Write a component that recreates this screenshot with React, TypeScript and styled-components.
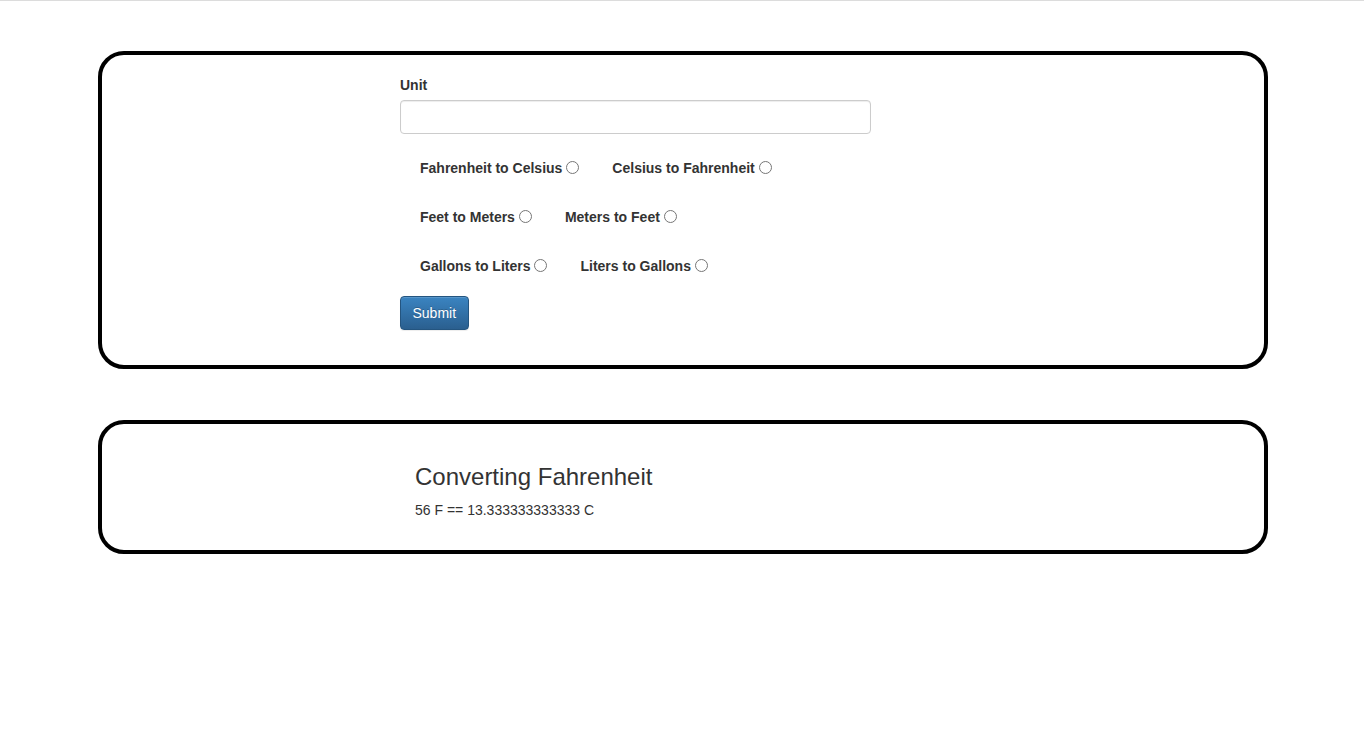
import React from "react";
import styled, { createGlobalStyle } from "styled-components";

const Global = createGlobalStyle`
  html, body { margin: 0; padding: 0; background: #fff; }
  body {
    font-family: "Liberation Sans", Arial, Helvetica, sans-serif;
    font-size: 14px;
    line-height: 20px;
    color: #333;
  }
  * { box-sizing: border-box; }
`;

const TopRule = styled.div`
  height: 1px;
  background: #dcdcdc;
`;

const Page = styled.main`
  display: flex;
  flex-direction: column;
  gap: 51px;
  padding: 50px 0 0 98px;
`;

const Card = styled.section<{ $inset: number; $bottom: number }>`
  width: 1170px;
  border: 4px solid #000;
  border-radius: 26px;
  padding: 20px 0 ${(p) => p.$bottom}px ${(p) => p.$inset}px;
`;

const Form = styled.form`
  display: flex;
  flex-direction: column;
  align-items: flex-start;
`;

const FieldLabel = styled.label`
  display: block;
  font-weight: bold;
  margin-bottom: 5px;
`;

const TextInput = styled.input`
  display: block;
  width: 471px;
  height: 34px;
  padding: 6px 12px;
  font: inherit;
  border: 1px solid #ccc;
  border-radius: 4px;
  box-shadow: inset 0 1px 1px rgba(0, 0, 0, 0.075);
  outline: none;
`;

const RadioGroup = styled.div`
  display: flex;
  flex-direction: column;
  gap: 29px;
  margin: 24px 0 20px;
`;

const RadioRow = styled.div`
  display: flex;
  gap: 30px;
  padding-left: 20px;
  height: 20px;
  align-items: center;
`;

const RadioLabel = styled.label`
  display: inline-flex;
  align-items: center;
  font-weight: bold;
  white-space: nowrap;
`;

const Radio = styled.input`
  width: 13px;
  height: 13px;
  margin: -2px 3px 0 4px;
`;

const SubmitButton = styled.button`
  height: 34px;
  padding: 6px 11.5px;
  font: inherit;
  color: #fff;
  background-image: linear-gradient(to bottom, #3a84c1 0, #2a5f8f 100%);
  border: 1px solid #245580;
  border-radius: 4px;
  text-shadow: 0 -1px 0 rgba(0, 0, 0, 0.2);
  box-shadow: inset 0 1px 0 rgba(255, 255, 255, 0.15), 0 1px 1px rgba(0, 0, 0, 0.075);
  cursor: pointer;
`;

const Heading = styled.h3`
  font-size: 24px;
  font-weight: 500;
  line-height: 1.1;
  margin: 20px 0 10px;
`;

const Result = styled.p`
  margin: 0 0 10px;
`;

const rows: [string, string][] = [
  ["Fahrenheit to Celsius", "Celsius to Fahrenheit"],
  ["Feet to Meters", "Meters to Feet"],
  ["Gallons to Liters", "Liters to Gallons"],
];

export default function App() {
  return (
    <>
      <Global />
      <TopRule />
      <Page>
        <Card $inset={298} $bottom={35}>
          <Form onSubmit={(e) => e.preventDefault()}>
            <FieldLabel htmlFor="unit">Unit</FieldLabel>
            <TextInput id="unit" type="text" />
            <RadioGroup>
              {rows.map((pair, i) => (
                <RadioRow key={i}>
                  {pair.map((t) => (
                    <RadioLabel key={t}>
                      {t}
                      <Radio type="radio" name="conv" value={t} />
                    </RadioLabel>
                  ))}
                </RadioRow>
              ))}
            </RadioGroup>
            <SubmitButton type="submit">Submit</SubmitButton>
          </Form>
        </Card>
        <Card $inset={313} $bottom={20}>
          <Heading>Converting Fahrenheit</Heading>
          <Result>56 F == 13.333333333333 C</Result>
        </Card>
      </Page>
    </>
  );
}
